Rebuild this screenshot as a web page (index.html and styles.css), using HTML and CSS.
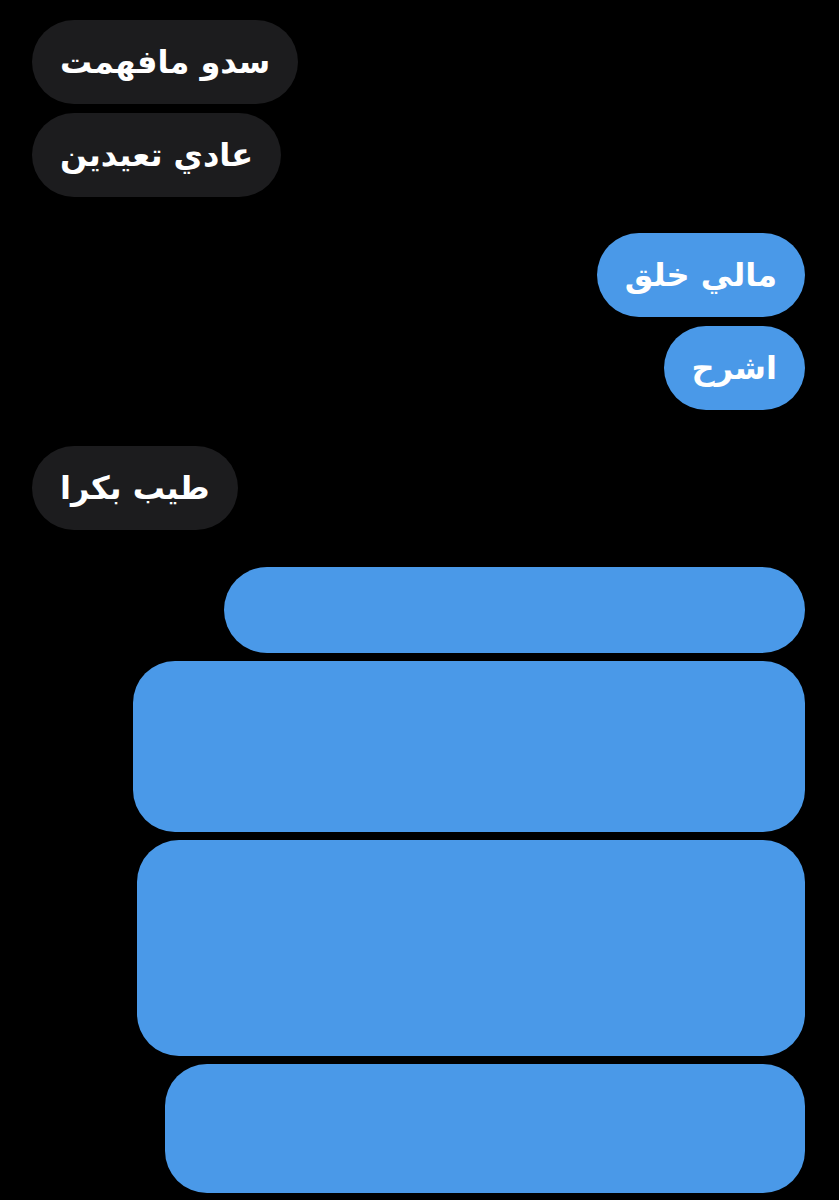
FILE: index.html
```html
<!DOCTYPE html>
<html lang="ar">
<head>
    <meta charset="UTF-8">
    <meta name="viewport" content="width=device-width, initial-scale=1.0">
    <title>المحادثة</title>
    <link rel="stylesheet" href="styles.css">
</head>
<body>
    <div class="chat">
        <div class="group">
            <div class="bubble recibido">سدو مافهمت</div>
            <div class="bubble recibido">عادي تعيدين</div>
        </div>

        <div class="group">
            <div class="bubble enviado">مالي خلق</div>
            <div class="bubble enviado">اشرح</div>
        </div>

        <div class="group">
            <div class="bubble recibido">طيب بكرا</div>
        </div>

        <!-- mensajes tapados -->
        <div class="group tapados">
            <div class="bloque bloque-a"></div>
            <div class="bloque bloque-b"></div>
            <div class="bloque bloque-c"></div>
            <div class="bloque bloque-d"></div>
        </div>
    </div>
</body>
</html>
```

FILE: styles.css
```css
body {
    margin: 0;
    background-color: #000;
    font-family: "DejaVu Sans", sans-serif;
}
.chat {
    display: flex;
    flex-direction: column;
    gap: 36px;
    padding: 20px 34px 0 32px;
    height: 1200px;
    box-sizing: border-box;
    overflow: hidden;
}
.group {
    display: flex;
    flex-direction: column;
    gap: 9px;
}
.bubble {
    direction: rtl;
    height: 84px;
    box-sizing: border-box;
    padding: 0 28px;
    border-radius: 42px;
    display: flex;
    align-items: center;
    color: #fff;
    font-size: 32px;
    font-weight: bold;
    white-space: nowrap;
}
.recibido {
    align-self: flex-start;
    background-color: #1c1c1e;
}
.enviado {
    align-self: flex-end;
    background-color: #4a99e8;
}
.tapados {
    gap: 8px;
    align-items: flex-end;
}
.bloque {
    background-color: #4a99e8;
    border-radius: 42px;
}
.bloque-a {
    width: 581px;
    height: 86px;
    border-radius: 43px;
    margin-top: 1px;
}
.bloque-b {
    width: 672px;
    height: 171px;
}
.bloque-c {
    width: 668px;
    height: 216px;
}
.bloque-d {
    width: 640px;
    height: 129px;
}
```
